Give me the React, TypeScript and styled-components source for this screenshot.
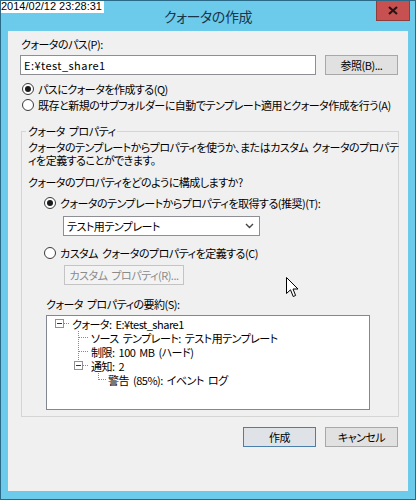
import * as React from "react";
import styled, { createGlobalStyle } from "styled-components";

const GlobalStyle = createGlobalStyle`
    body {
        margin: 0;
        background: #ffffff;
    }
`;

const ui = `"Noto Sans CJK JP", "Noto Sans", sans-serif`;

const Window = styled.div`
    position: relative;
    width: 416px;
    height: 500px;
    box-sizing: border-box;
    border: 1px solid #2a6a88;
    background: #6ccbeb;
    font-family: ${ui};
    font-size: 11px;
    letter-spacing: -0.5px;
    word-spacing: 2px;
    font-feature-settings: "palt";
    color: #000;
    overflow: hidden;
`;

const Stamp = styled.div`
    position: absolute;
    left: -1px;
    top: -1px;
    z-index: 3;
    padding: 0 2px 0 1px;
    height: 13px;
    line-height: 13px;
    background: #ffffff;
    font-family: "Liberation Sans", Arial, sans-serif;
    font-size: 11px;
    letter-spacing: 0;
    word-spacing: 0;
    font-feature-settings: normal;
    color: #000;
`;

const TitleBar = styled.div`
    position: relative;
    height: 30px;
    display: flex;
    align-items: center;
    justify-content: center;
`;

const Title = styled.div`
    font-size: 14px;
    letter-spacing: -0.4px;
    line-height: 30px;
    color: #1b3548;
`;

const CloseButton = styled.div`
    position: absolute;
    top: -1px;
    right: 5px;
    width: 34px;
    height: 21px;
    box-sizing: border-box;
    background: #c75050;
    border: 1px solid #8e3c3c;
    border-top: none;
    display: flex;
    align-items: center;
    justify-content: center;
`;

const Client = styled.div`
    margin: 0 7px;
    height: 460px;
    box-sizing: border-box;
    background: #f0f0f0;
    padding: 6px 10px 0 12px;
    display: flex;
    flex-direction: column;
`;

const Text = styled.div<{ $indent?: number; $top?: number }>`
    line-height: 14px;
    white-space: nowrap;
    margin-left: ${(p) => p.$indent ?? 0}px;
    margin-top: ${(p) => p.$top ?? 0}px;
`;

const Row = styled.div<{ $top?: number; $indent?: number }>`
    display: flex;
    align-items: center;
    gap: 9px;
    margin-top: ${(p) => p.$top ?? 0}px;
    margin-left: ${(p) => p.$indent ?? 0}px;
`;

const TextBox = styled.div`
    width: 296px;
    height: 20px;
    box-sizing: border-box;
    border: 1px solid #8d8f94;
    background: #fff;
    padding: 0 3px;
    line-height: 18px;
    letter-spacing: 0.45px;
    font-feature-settings: normal;
`;

const Button = styled.div<{ $width?: number; $default?: boolean; $disabled?: boolean }>`
    width: ${(p) => p.$width ?? 73}px;
    height: 20px;
    box-sizing: border-box;
    border: 1px solid
        ${(p) => (p.$default ? "#4a7fac" : p.$disabled ? "#c4c4c4" : "#a8a8a8")};
    background: ${(p) => (p.$default ? "#dfe3e7" : p.$disabled ? "#f3f3f3" : "#e1e1e1")};
    color: ${(p) => (p.$disabled ? "#8a8a8a" : "#000")};
    display: flex;
    align-items: center;
    justify-content: center;
    line-height: 18px;
    white-space: nowrap;
`;

const RadioRow = styled.div<{ $indent?: number; $top?: number }>`
    display: flex;
    align-items: center;
    gap: 4px;
    height: 16px;
    margin-left: ${(p) => p.$indent ?? 0}px;
    margin-top: ${(p) => p.$top ?? 0}px;
    white-space: nowrap;
`;

const RadioDot = styled.span<{ $on?: boolean }>`
    width: 12px;
    height: 12px;
    box-sizing: border-box;
    border-radius: 50%;
    border: 1px solid #3a3a3a;
    background: #fff;
    display: inline-flex;
    align-items: center;
    justify-content: center;
    flex: none;

    &::after {
        content: "";
        width: 6px;
        height: 6px;
        border-radius: 50%;
        background: #1a1a1a;
        display: ${(p) => (p.$on ? "block" : "none")};
    }
`;

const Group = styled.fieldset`
    margin: 11px 0 0 1px;
    width: 378px;
    box-sizing: border-box;
    padding: 0 0 6px 6px;
    border: 1px solid #d5d5d5;
    min-width: 0;
`;

const Legend = styled.legend`
    padding: 0 2px;
    margin-left: -2px;
    line-height: 14px;
`;

const Desc = styled.div`
    margin-top: 3px;
    line-height: 13px;
    white-space: nowrap;
`;

const Combo = styled.div`
    margin: 5px 0 0 35px;
    width: 197px;
    height: 20px;
    box-sizing: border-box;
    border: 1px solid #8d8f94;
    background: #fff;
    padding: 0 5px 0 3px;
    display: flex;
    align-items: center;
    justify-content: space-between;
    line-height: 18px;
`;

const TreeBox = styled.div`
    margin: 4px 0 0 18px;
    width: 324px;
    height: 95px;
    box-sizing: border-box;
    border: 1px solid #828790;
    background: #fff;
    padding-top: 1px;
`;

const TreeRow = styled.div`
    display: flex;
    align-items: center;
    height: 14px;
    line-height: 14px;
    white-space: nowrap;
`;

const Footer = styled.div`
    margin-top: 10px;
    display: flex;
    justify-content: flex-end;
    gap: 9px;
`;

const Cursor = styled.svg`
    position: absolute;
    left: 285px;
    top: 276px;
`;

const dot = { stroke: "#8a8a8a", strokeWidth: 1, strokeDasharray: "1 1" };

const MinusBox: React.FC<{ x: number }> = ({ x }) => (
    <g>
        <rect x={x + 0.5} y={2.5} width={8} height={8} fill="#fff" stroke="#919191" />
        <line x1={x + 2} y1={6.5} x2={x + 7} y2={6.5} stroke="#333" />
    </g>
);

type Gutter = "root" | "leaf" | "node" | "last";

const TreeGutter: React.FC<{ kind: Gutter }> = ({ kind }) => {
    const width = kind === "root" ? 25 : kind === "last" ? 61 : 44;
    return (
        <svg width={width} height={14} style={{ flex: "none" }}>
            {kind === "root" && (
                <>
                    <MinusBox x={8} />
                    <line x1={17} y1={6.5} x2={23} y2={6.5} {...dot} />
                </>
            )}
            {kind === "leaf" && (
                <>
                    <line x1={31.5} y1={0} x2={31.5} y2={14} {...dot} />
                    <line x1={32} y1={6.5} x2={42} y2={6.5} {...dot} />
                </>
            )}
            {kind === "node" && (
                <>
                    <line x1={31.5} y1={0} x2={31.5} y2={2} {...dot} />
                    <MinusBox x={27} />
                    <line x1={36} y1={6.5} x2={42} y2={6.5} {...dot} />
                </>
            )}
            {kind === "last" && (
                <>
                    <line x1={51.5} y1={0} x2={51.5} y2={7} {...dot} />
                    <line x1={52} y1={6.5} x2={60} y2={6.5} {...dot} />
                </>
            )}
        </svg>
    );
};

const tree: { kind: Gutter; text: string }[] = [
    { kind: "root", text: "クォータ: E:¥test_share1" },
    { kind: "leaf", text: "ソース テンプレート: テスト用テンプレート" },
    { kind: "leaf", text: "制限: 100 MB (ハード)" },
    { kind: "node", text: "通知: 2" },
    { kind: "last", text: "警告 (85%): イベント ログ" },
];

const App: React.FC = () => {
    return (
        <>
            <GlobalStyle />
            <Window>
                <Stamp>2014/02/12 23:28:31</Stamp>
                <TitleBar>
                    <Title>クォータの作成</Title>
                    <CloseButton>
                        <svg width="10" height="9" viewBox="0 0 10 9">
                            <path d="M1 1 L9 8 M9 1 L1 8" stroke="#2a1414" strokeWidth="2.2" />
                        </svg>
                    </CloseButton>
                </TitleBar>
                <Client>
                    <Text $indent={1}>クォータのパス(P):</Text>
                    <Row $top={4}>
                        <TextBox>E:¥test_share1</TextBox>
                        <Button>参照(B)...</Button>
                    </Row>
                    <RadioRow $indent={2} $top={6}>
                        <RadioDot $on />
                        パスにクォータを作成する(Q)
                    </RadioRow>
                    <RadioRow $indent={2}>
                        <RadioDot />
                        既存と新規のサブフォルダーに自動でテンプレート適用とクォータ作成を行う(A)
                    </RadioRow>
                    <Group>
                        <Legend>クォータ プロパティ</Legend>
                        <Desc>
                            クォータのテンプレートからプロパティを使うか、またはカスタム クォータのプロパテ
                            <br />
                            ィを定義することができます。
                        </Desc>
                        <Text $top={8}>クォータのプロパティをどのように構成しますか?</Text>
                        <RadioRow $indent={16} $top={6}>
                            <RadioDot $on />
                            クォータのテンプレートからプロパティを取得する(推奨)(T):
                        </RadioRow>
                        <Combo>
                            <span>テスト用テンプレート</span>
                            <svg width="9" height="6" viewBox="0 0 9 6">
                                <path d="M1 1 L4.5 4.5 L8 1" fill="none" stroke="#444" strokeWidth="1.4" />
                            </svg>
                        </Combo>
                        <RadioRow $indent={16} $top={9}>
                            <RadioDot />
                            カスタム クォータのプロパティを定義する(C)
                        </RadioRow>
                        <Row $top={4} $indent={36}>
                            <Button $width={120} $disabled>
                                カスタム プロパティ(R)...
                            </Button>
                        </Row>
                        <Text $top={12} $indent={18}>
                            クォータ プロパティの要約(S):
                        </Text>
                        <TreeBox>
                            {tree.map((item) => (
                                <TreeRow key={item.text}>
                                    <TreeGutter kind={item.kind} />
                                    {item.text}
                                </TreeRow>
                            ))}
                        </TreeBox>
                    </Group>
                    <Footer>
                        <Button $default>作成</Button>
                        <Button>キャンセル</Button>
                    </Footer>
                </Client>
                <Cursor width="13" height="21" viewBox="0 0 13 21">
                    <path
                        d="M0.5 0.5 L0.5 16.5 L4.5 12.8 L7.2 19.5 L9.6 18.5 L7 12 L12 12 Z"
                        fill="#fff"
                        stroke="#000"
                        strokeWidth="1"
                        strokeLinejoin="miter"
                    />
                </Cursor>
            </Window>
        </>
    );
};

export default App;
